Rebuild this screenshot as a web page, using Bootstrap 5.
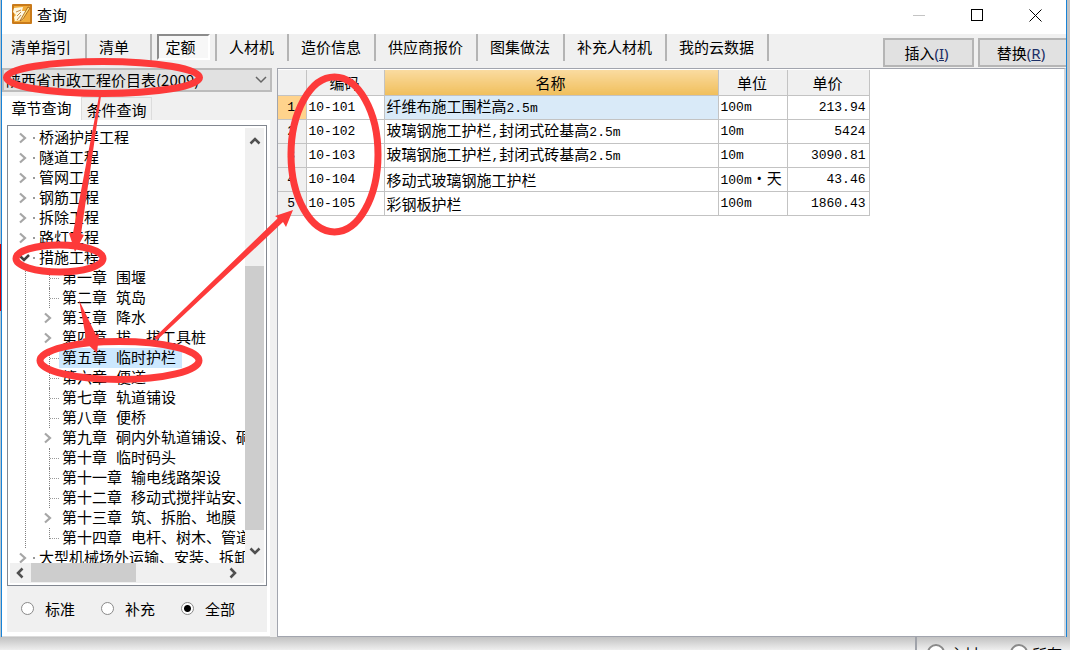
<!DOCTYPE html>
<html lang="zh-CN">
<head>
<meta charset="utf-8">
<meta name="viewport" content="width=device-width, initial-scale=1">
<title>查询</title>
<link href="https://cdn.jsdelivr.net/npm/bootstrap@5.3.0/dist/css/bootstrap.min.css" rel="stylesheet">
<style>
body{font:15px/20px "Noto Sans CJK SC",sans-serif;color:#000;background:#c6c7c8}
button,select,input{font:inherit;color:inherit}
.page{height:100vh}
.edge-l{width:2px;background:#b9c4cc;border-right:1px solid #1883d7}
.edge-l i{display:block;height:67px;margin-top:244px;background:#e00000}
.edge-r{width:4px;border-left:1px solid #1883d7;background:#c3c3c3}
.win{background:#f0f0f0;min-width:0}
.titlebar{height:34px;background:#fff;padding:0 2px 0 10px;line-height:30px}
.titlebar button{width:58px;height:30px;border:0;background:none;padding:0}
.titlebar svg,.tree svg,.bar svg{display:block}
.tool{height:35px}
.tab-item{height:27px;border:0;border-right:2px solid #b4b4b4;background:none;padding:0 13px 0 12px;white-space:nowrap;line-height:24px}
.tab-item.first{padding:0 14px 0 9px}
.tab-item.wide{padding:0 21px 0 12px}
.tab-on{width:53px;height:26px;margin:0 5px;border:2px solid #fff;border-top-color:#8c8c8c;border-left-color:#8c8c8c;background:#f7f7f7;padding:0 6px 0 0;line-height:22px}
.sep{width:2px;height:27px;background:#b4b4b4}
.cmd{height:29px;width:91px;border:2px solid #b5b5b5;background:#e1e1e1;padding:0 4px 0 0;line-height:25px;white-space:nowrap}
.cmd.last{width:88px;border-right:0}
.cmd span{color:#1c2f66;font-family:"Noto Sans",sans-serif;font-size:15px}
.side{width:275px}
.pick{height:24px;width:270px;border:2px solid #bcbcbc;background:#e1e1e1;border-radius:0;padding:0 2px;appearance:none;line-height:20px}
.pick-arrow{right:10px;top:8px;pointer-events:none}
.latin{font-family:"Liberation Mono",monospace;font-size:13px}
.sub-on,.sub-off{border:0;padding:0 8px;height:24px;line-height:24px}
.sub-on{background:#fff;width:79px}
.sub-off{background:#f0f0f0;border:1px solid #dcdcdc;border-bottom:0;width:71px;height:23px;padding:0 4px}
.sheet{width:268px;background:#fff;padding:5px 3px 4px 5px;border-bottom:1px solid #dcdcdc}
.treebox{border:1px solid #828790;padding:2px;min-height:0}
.tree{font-family:"Liberation Mono","Noto Sans CJK SC",monospace;white-space:nowrap;min-width:0;overflow:hidden;margin-left:-2px}
.tree ul{list-style:none;margin:0;padding:0}
.tree ul ul{margin-left:17px;border-left:1px dotted #808080}
.tree .node{display:flex;height:20px;align-items:center}
.tree .knob{width:27px;padding-left:10px;flex:none;background:radial-gradient(circle,#999 0 1px,transparent 1px) 25px 5px/2px 2px no-repeat}
.tree ul ul .knob{width:33px;padding-left:17px;background:none}
.tree .leaf{height:20px;width:10px;margin-left:23px;margin-right:0;border-left:1px dotted #808080;flex:none;background:linear-gradient(90deg,#999 50%,transparent 50%) 0 10px/2px 1px repeat-x}
.tree .leaf.end{align-self:flex-start;height:11px}
.tree .tag{height:20px;line-height:24px;padding:0 6px 0 4px}
.tree ul ul .tag{padding-left:3px}
.tree .picked{background:#cce8ff}
.bar{background:#f0f0f0}
.bar-v{width:19px;flex:none;padding:8px 0 7px}
.bar-v .thumb{flex:0 0 63%;background:#cdcdcd}
.bar-h{height:20px;padding:0 5px}
.bar-h .thumb{width:105px;height:19px;background:#cdcdcd;margin-left:7px}
.kinds{height:47px;background:#f0f0f0;padding-left:14px}
.kinds label{width:80px;display:flex;align-items:center;gap:11px}
.kinds input,.behind input{appearance:none;width:13px;height:13px;border:1px solid #8a8a8a;border-radius:50%;background:#fff;margin:0}
.kinds input:checked{background:radial-gradient(circle,#000 0 3px,#fff 4px)}
.main{border:1px solid #a2a5ae;border-right:2px solid #d5d7da;background:#fff;min-width:0}
.grid{width:591px;table-layout:fixed;border-collapse:collapse;margin-top:1px}
.grid th,.grid td{height:24px;border:1px solid #c3c3c3;border-top:0;padding:0 3px 0 2px;line-height:20px;font-weight:400;white-space:nowrap}
.grid tbody td,.grid tbody th{padding-top:1px;line-height:18px}
.grid th{background:#f0f0f0;text-align:center}
.grid thead th{height:25px}
.grid tr>:first-child{border-left:0}
.grid .gold{background:linear-gradient(#fadba0,#f0bf5c)}
.grid .now{background:#ffd38c}
.grid .sel{background:#d9eaf8}
.grid .num{text-align:right}
.behind{height:13px;background:linear-gradient(#c2c2c2,#eee);overflow:hidden}
.behind .zone{width:155px;border-left:2px solid #a0a3aa;padding:7px 0 0 10px}
.behind label{display:flex;width:83px;gap:4px;flex:none}
.behind input{width:18px;height:18px;border-width:2px;flex:none}
.notes{left:0;top:0;width:1070px;height:650px;pointer-events:none}
</style>
</head>
<body>
<div class="page d-flex flex-column overflow-hidden position-relative">
 <div class="d-flex flex-grow-1" style="min-height:0">
  <div class="edge-l"><i></i></div>
  <div class="win d-flex flex-column flex-grow-1">
   <header class="titlebar d-flex">
    <svg class="mt-1 me-1" width="21" height="21" viewBox="0 0 21 21"><rect x="0" y="0" width="20" height="20" rx="1" fill="#c97a1a"/><path d="M2 2h16v16H2z" fill="#f0ab3a"/><path d="M2 4l9-1-1 4 4 0-3 9-8 1-1-4 2-2-3-3z" fill="#fff8e0"/><path d="M4 8l5-2M5 12l4-4M5 16l4-5" stroke="#c08a4a" stroke-width="1"/><path d="M9 15L16 3l2 1-7 11-3 2z" fill="#ffe27a" stroke="#9a5512" stroke-width=".8"/></svg>
    <span class="flex-grow-1">查询</span>
    <button type="button" aria-label="最小化"><svg class="mx-auto" width="13" height="13"><path d="M0 6.500h12" stroke="#c4c4c4"/></svg></button>
    <button type="button" aria-label="最大化"><svg class="mx-auto" width="13" height="13"><rect x=".5" y=".5" width="11" height="11" fill="none" stroke="#000"/></svg></button>
    <button type="button" aria-label="关闭"><svg class="mx-auto" width="13" height="13"><path d="M.5.500l12 12M12.500.500l-12 12" stroke="#000"/></svg></button>
   </header>
   <nav class="tool d-flex">
    <button type="button" class="tab-item first">清单指引</button>
    <button type="button" class="tab-item wide">清单</button>
    <button type="button" class="tab-on">定额</button>
    <span class="sep"></span>
    <button type="button" class="tab-item">人材机</button>
    <button type="button" class="tab-item">造价信息</button>
    <button type="button" class="tab-item">供应商报价</button>
    <button type="button" class="tab-item">图集做法</button>
    <button type="button" class="tab-item">补充人材机</button>
    <button type="button" class="tab-item">我的云数据</button>
    <div class="d-flex ms-auto mt-1">
     <button type="button" class="cmd me-1">插入<span>(<u>I</u>)</span></button>
     <button type="button" class="cmd last">替换<span>(<u>R</u>)</span></button>
    </div>
   </nav>
   <div class="d-flex flex-grow-1" style="min-height:0">
    <aside class="side d-flex flex-column flex-shrink-0">
     <div class="position-relative">
      <select class="pick d-block" aria-label="价目表"><option>陕西省市政工程价目表(2009)</option></select>
      <svg class="pick-arrow position-absolute" width="12" height="8"><path d="M1 1l5 5 5-5" fill="none" stroke="#666" stroke-width="1.5"/></svg>
     </div>
     <div class="d-flex align-items-end mt-1">
      <button type="button" class="sub-on">章节查询</button>
      <button type="button" class="sub-off">条件查询</button>
     </div>
     <div class="sheet d-flex flex-column flex-grow-1" style="min-height:0">
      <div class="treebox d-flex flex-column flex-grow-1">
       <div class="d-flex flex-grow-1" style="min-height:0">
        <div class="tree flex-grow-1">
         <ul id="roots"></ul>
        </div>
        <div class="bar bar-v d-flex flex-column align-items-stretch justify-content-between">
         <svg class="mx-auto" width="12" height="9"><path d="M1.500 7.500L6 3l4.500 4.500" fill="none" stroke="#505050" stroke-width="2.500"/></svg>
         <div class="flex-grow-1"></div>
         <div class="thumb"></div>
         <div style="flex:0 0 4%"></div>
         <svg class="mx-auto" width="12" height="9"><path d="M1.500 1.500L6 6l4.500-4.500" fill="none" stroke="#505050" stroke-width="2.500"/></svg>
        </div>
       </div>
       <div class="bar bar-h d-flex align-items-center">
        <svg width="9" height="12"><path d="M7.500 1.500L3 6l4.500 4.500" fill="none" stroke="#505050" stroke-width="2.500"/></svg>
        <div class="thumb"></div>
        <svg class="ms-auto me-3" width="14" height="12"><path d="M1.500 1.500L6 6l-4.500 4.500" fill="none" stroke="#505050" stroke-width="2.500"/></svg>
       </div>
      </div>
      <div class="kinds d-flex align-items-center">
       <label><input type="radio" name="kind">标准</label>
       <label><input type="radio" name="kind">补充</label>
       <label><input type="radio" name="kind" checked>全部</label>
      </div>
     </div>
    </aside>
    <main class="main flex-grow-1">
     <table class="grid">
      <colgroup><col style="width:28px"><col style="width:78px"><col style="width:334px"><col style="width:69px"><col style="width:82px"></colgroup>
      <thead><tr><th></th><th>编码</th><th class="gold">名称</th><th>单位</th><th>单价</th></tr></thead>
      <tbody>
       <tr><th class="now latin">1</th><td class="latin">10-101</td><td class="sel">纤维布施工围栏高<span class="latin">2.5m</span></td><td class="latin">100m</td><td class="latin num">213.94</td></tr>
       <tr><th class="latin">2</th><td class="latin">10-102</td><td>玻璃钢施工护栏<span class="latin">,</span>封闭式砼基高<span class="latin">2.5m</span></td><td class="latin">10m</td><td class="latin num">5424</td></tr>
       <tr><th class="latin">3</th><td class="latin">10-103</td><td>玻璃钢施工护栏<span class="latin">,</span>封闭式砖基高<span class="latin">2.5m</span></td><td class="latin">10m</td><td class="latin num">3090.81</td></tr>
       <tr><th class="latin">4</th><td class="latin">10-104</td><td>移动式玻璃钢施工护栏</td><td><span class="latin">100m</span>・天</td><td class="latin num">43.46</td></tr>
       <tr><th class="latin">5</th><td class="latin">10-105</td><td>彩钢板护栏</td><td class="latin">100m</td><td class="latin num">1860.43</td></tr>
      </tbody>
     </table>
    </main>
   </div>
  </div>
  <div class="edge-r"></div>
 </div>
 <div class="behind d-flex justify-content-end">
  <div class="zone d-flex">
   <label><input type="radio" name="scope">主材</label>
   <label><input type="radio" name="scope" checked>所有</label>
  </div>
 </div>
 <svg class="notes position-absolute" viewBox="0 0 1070 650">
  <g fill="none" stroke="#fd3a3a" stroke-width="7">
   <ellipse cx="103" cy="77.500" rx="96.500" ry="16"/>
   <ellipse cx="59.500" cy="258.500" rx="43.500" ry="13.500"/>
   <ellipse cx="119.500" cy="360.500" rx="79.500" ry="19"/>
   <ellipse cx="334.500" cy="154.500" rx="43.500" ry="77.500"/>
  </g>
  <g fill="#fd3a3a">
   <path d="M99 96h2L81 234l3 1-9 17-6-19 4 0z"/>
   <path d="M79 300l17 35 3-1-2 19-15-14 4-1z"/>
   <path d="M154 338L278 218l-3-2 18-6-7 17-3-5L157 340z"/>
  </g>
 </svg>
</div>
<script>
const chapters = [
 ['第一章 围堰'],['第二章 筑岛'],['第三章 降水',1],['第四章 拔、拔工具桩',1],['第五章 临时护栏',0,1],
 ['第六章 便道'],['第七章 轨道铺设'],['第八章 便桥'],['第九章 硐内外轨道铺设、硐',1],['第十章 临时码头'],
 ['第十一章 输电线路架设'],['第十二章 移动式搅拌站安、'],['第十三章 筑、拆胎、地膜',1],['第十四章 电杆、树木、管道']];
const roots = ['桥涵护岸工程','隧道工程','管网工程','钢筋工程','拆除工程','路灯工程','措施工程','大型机械场外运输、安装、拆卸'];
const shut = '<span class="knob"><svg width="10" height="12"><path d="M2 1.500L7 6l-5 4.500" fill="none" stroke="#a6a6a6" stroke-width="2.200"/></svg></span>';
const open = '<span class="knob"><svg width="12" height="12"><path d="M2 4l4 4 5-5" fill="none" stroke="#404040" stroke-width="2.500"/></svg></span>';
const node = (mark, text, picked) => `<div class="node">${mark}<span class="tag${picked ? ' picked' : ''}">${text}</span></div>`;
const branch = chapters.map(([text, kids, picked], i) =>
 `<li>${node(kids ? shut : `<span class="leaf${i === chapters.length - 1 ? ' end' : ''}"></span>`, text, picked)}</li>`).join('');
document.getElementById('roots').innerHTML = roots.map(t =>
 t === '措施工程' ? `<li>${node(open, t)}<ul>${branch}</ul></li>` : `<li>${node(shut, t)}</li>`).join('');
</script>
<script src="https://cdn.jsdelivr.net/npm/bootstrap@5.3.0/dist/js/bootstrap.bundle.min.js"></script>
</body>
</html>
